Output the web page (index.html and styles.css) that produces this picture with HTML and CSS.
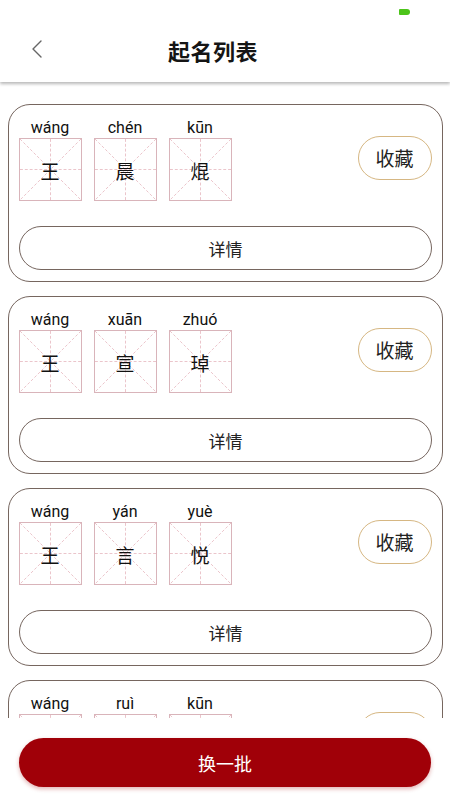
FILE: index.html
```html
<!DOCTYPE html>
<html lang="zh">
<head>
    <meta charset="UTF-8">
    <meta name="viewport" content="width=device-width, initial-scale=1.0">
    <title>起名列表</title>
    <link rel="stylesheet" href="styles.css">
</head>
<body>
    <div class="page">
        <header class="header">
            <div class="status-bar"><span class="battery"></span></div>
            <div class="nav">
                <a class="back" href="#">
                    <svg width="12" height="20" viewBox="0 0 12 20"><path d="M10 2 L2 10 L10 18" fill="none" stroke="#666" stroke-width="1.4" stroke-linecap="round" stroke-linejoin="round"/></svg>
                </a>
                <h1>起名列表</h1>
            </div>
        </header>

        <main class="list">
            <div class="card">
                <div class="card-top">
                    <div class="chars">
                        <div class="char"><div class="py">wáng</div><div class="tian"><svg viewBox="0 0 63 63"><path class="grid" d="M0 0L63 63M63 0L0 63M31.5 0V63M0 31.5H63"/></svg><span>王</span></div></div>
                        <div class="char"><div class="py">chén</div><div class="tian"><svg viewBox="0 0 63 63"><path class="grid" d="M0 0L63 63M63 0L0 63M31.5 0V63M0 31.5H63"/></svg><span>晨</span></div></div>
                        <div class="char"><div class="py">kūn</div><div class="tian"><svg viewBox="0 0 63 63"><path class="grid" d="M0 0L63 63M63 0L0 63M31.5 0V63M0 31.5H63"/></svg><span>焜</span></div></div>
                    </div>
                    <button class="fav">收藏</button>
                </div>
                <button class="detail">详情</button>
            </div>

            <div class="card">
                <div class="card-top">
                    <div class="chars">
                        <div class="char"><div class="py">wáng</div><div class="tian"><svg viewBox="0 0 63 63"><path class="grid" d="M0 0L63 63M63 0L0 63M31.5 0V63M0 31.5H63"/></svg><span>王</span></div></div>
                        <div class="char"><div class="py">xuān</div><div class="tian"><svg viewBox="0 0 63 63"><path class="grid" d="M0 0L63 63M63 0L0 63M31.5 0V63M0 31.5H63"/></svg><span>宣</span></div></div>
                        <div class="char"><div class="py">zhuó</div><div class="tian"><svg viewBox="0 0 63 63"><path class="grid" d="M0 0L63 63M63 0L0 63M31.5 0V63M0 31.5H63"/></svg><span>琸</span></div></div>
                    </div>
                    <button class="fav">收藏</button>
                </div>
                <button class="detail">详情</button>
            </div>

            <div class="card">
                <div class="card-top">
                    <div class="chars">
                        <div class="char"><div class="py">wáng</div><div class="tian"><svg viewBox="0 0 63 63"><path class="grid" d="M0 0L63 63M63 0L0 63M31.5 0V63M0 31.5H63"/></svg><span>王</span></div></div>
                        <div class="char"><div class="py">yán</div><div class="tian"><svg viewBox="0 0 63 63"><path class="grid" d="M0 0L63 63M63 0L0 63M31.5 0V63M0 31.5H63"/></svg><span>言</span></div></div>
                        <div class="char"><div class="py">yuè</div><div class="tian"><svg viewBox="0 0 63 63"><path class="grid" d="M0 0L63 63M63 0L0 63M31.5 0V63M0 31.5H63"/></svg><span>悦</span></div></div>
                    </div>
                    <button class="fav">收藏</button>
                </div>
                <button class="detail">详情</button>
            </div>

            <div class="card">
                <div class="card-top">
                    <div class="chars">
                        <div class="char"><div class="py">wáng</div><div class="tian"><svg viewBox="0 0 63 63"><path class="grid" d="M0 0L63 63M63 0L0 63M31.5 0V63M0 31.5H63"/></svg><span>王</span></div></div>
                        <div class="char"><div class="py">ruì</div><div class="tian"><svg viewBox="0 0 63 63"><path class="grid" d="M0 0L63 63M63 0L0 63M31.5 0V63M0 31.5H63"/></svg><span>睿</span></div></div>
                        <div class="char"><div class="py">kūn</div><div class="tian"><svg viewBox="0 0 63 63"><path class="grid" d="M0 0L63 63M63 0L0 63M31.5 0V63M0 31.5H63"/></svg><span>坤</span></div></div>
                    </div>
                    <button class="fav">收藏</button>
                </div>
                <button class="detail">详情</button>
            </div>
        </main>

        <footer class="footer">
            <button class="refresh">换一批</button>
        </footer>
    </div>
</body>
</html>
```

FILE: styles.css
```css
* {
    box-sizing: border-box;
}
body {
    margin: 0;
    padding: 0;
    background: #fff;
    font-family: 'Roboto', 'Noto Sans CJK SC', sans-serif;
    color: #111;
}
.page {
    height: 800px;
    display: flex;
    flex-direction: column;
    overflow: hidden;
}
.header {
    height: 82px;
    background: #fff;
    box-shadow: 0 2px 3px rgba(0, 0, 0, 0.28);
    position: relative;
    z-index: 2;
}
.status-bar {
    height: 24px;
    display: flex;
    justify-content: flex-end;
    padding: 9px 40px 0 0;
}
.battery {
    width: 11px;
    height: 6px;
    background: #4cc41a;
    border-radius: 1px 3px 3px 1px;
}
.nav {
    height: 52px;
    display: flex;
    align-items: center;
    justify-content: center;
    padding-right: 24px;
    position: relative;
}
.back {
    position: absolute;
    left: 31px;
    top: 15px;
    display: flex;
}
.nav h1 {
    margin: 0;
    font-family: 'Noto Sans CJK SC', sans-serif;
    font-size: 22px;
    font-weight: 700;
    color: #151515;
    letter-spacing: 0.5px;
}
.list {
    flex: 1;
    overflow: hidden;
    padding: 22px 7px 0 8px;
    display: flex;
    flex-direction: column;
    gap: 14px;
}
.card {
    flex-shrink: 0;
    height: 178px;
    border: 1.6px solid #76665f;
    border-radius: 22px;
    padding: 12px 10.5px 0 9.5px;
    display: flex;
    flex-direction: column;
}
.card-top {
    display: flex;
    align-items: center;
    justify-content: space-between;
    height: 84px;
}
.chars {
    display: flex;
    gap: 12px;
}
.char {
    display: flex;
    flex-direction: column;
    align-items: center;
}
.py {
    font-family: 'Roboto', sans-serif;
    font-size: 16px;
    line-height: 20px;
    height: 20px;
    color: #111;
}
.tian {
    width: 63px;
    height: 63px;
    border: 1px solid #d9b4ba;
    display: grid;
}
.tian svg,
.tian span {
    grid-area: 1 / 1;
}
.tian svg {
    width: 61px;
    height: 61px;
}
.grid {
    fill: none;
    stroke: #e8bcc3;
    stroke-width: 0.9;
    stroke-dasharray: 3 2;
}
.tian span {
    display: flex;
    align-items: center;
    justify-content: center;
    padding-top: 2px;
    font-family: 'Noto Sans CJK SC', sans-serif;
    font-size: 19px;
    color: #111;
}
.fav {
    width: 74px;
    height: 44px;
    margin-top: -3px;
    background: #fff;
    border: 1.5px solid #d6b783;
    border-radius: 22px;
    font-family: 'Noto Sans CJK SC', sans-serif;
    font-size: 19px;
    color: #222;
    padding: 0;
}
.detail {
    margin-top: 25px;
    margin-left: 0.5px;
    height: 44px;
    width: 100%;
    background: #fff;
    border: 1.6px solid #76665f;
    border-radius: 22px;
    font-family: 'Noto Sans CJK SC', sans-serif;
    font-size: 17px;
    color: #222;
}
.footer {
    height: 82px;
    flex-shrink: 0;
    background: #fff;
    padding: 20px 19px 0 19px;
}
.refresh {
    width: 100%;
    height: 49px;
    background: #a00008;
    color: #fff;
    border: none;
    border-radius: 25px;
    font-family: 'Noto Sans CJK SC', sans-serif;
    font-size: 18px;
    box-shadow: 0 2px 4px rgba(160, 0, 8, 0.3);
}
```
